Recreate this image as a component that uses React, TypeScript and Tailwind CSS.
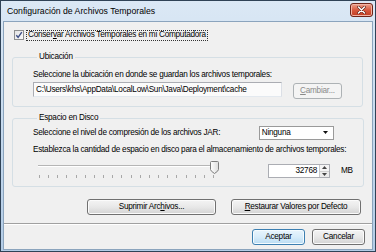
import React from "react";

const Btn = ({ children, w, def, disabled }: { children: React.ReactNode; w: string; def?: boolean; disabled?: boolean }) => (
  <div
    className={
      "h-[16px] flex items-center justify-center rounded-[3px] border " +
      w +
      " " +
      (disabled
        ? "border-[#adb2b5] bg-[#f4f4f4] text-[#8b8b8b]"
        : def
        ? "border-[#3c7fb1] bg-linear-to-b from-[#e9f5fd] via-[#d7ecfa] to-[#b9dcf3] shadow-[inset_0_0_0_1px_#f4fbff]"
        : "border-[#707070] bg-linear-to-b from-[#f4f4f4] via-[#e8e8e8] to-[#d3d3d3] shadow-[inset_0_0_0_1px_#fbfbfb]")
    }
  >
    {children}
  </div>
);

export default function App() {
  const ticks = Array.from({ length: 20 });
  return (
    <div className="w-[376px] h-[252px] border border-[#2f4256] px-[2px] pb-[1px] flex flex-col bg-linear-to-b from-[#dbe8f5] via-[#c6daee] to-[#b3cce6] font-['Liberation_Sans',Arial,sans-serif] text-[8.2px] tracking-[-0.25px] text-black leading-[10px] overflow-hidden">
      {/* Title bar */}
      <div className="h-[20px] flex items-start justify-between">
        <div className="pl-[4px] pt-[5px] text-[8.7px] tracking-normal leading-[11px] text-black">
          Configuración de Archivos Temporales
        </div>
        <div className="mt-[2px] w-[23px] h-[14px] rounded-[3px] border border-[#6e2418] bg-linear-to-b from-[#eba08d] via-[#d85a3f] to-[#c13a1f] shadow-[inset_0_0_0_1px_#f2b4a4] flex items-center justify-center">
          <svg width="9" height="8" viewBox="0 0 9 8">
            <path d="M1.5 1 L7.5 7 M7.5 1 L1.5 7" stroke="#5a1a10" strokeWidth="2.6" strokeLinecap="round" />
            <path d="M1.5 1 L7.5 7 M7.5 1 L1.5 7" stroke="#ffffff" strokeWidth="1.5" strokeLinecap="round" />
          </svg>
        </div>
      </div>

      {/* Client area */}
      <div className="flex-1 border border-[#8ba4bd] bg-[#f0f0f0] flex flex-col">
        {/* checkbox row */}
        <div className="mt-[8px] ml-[10px] flex items-center h-[10px]">
          <div className="w-[10px] h-[10px] border border-[#8e8f8f] bg-linear-to-br from-[#e4e4e4] to-[#fafafa] flex items-center justify-center">
            <svg width="8" height="8" viewBox="0 0 8 8">
              <path d="M1.3 4.3 L3.1 6.3 L6.8 1.2" stroke="#3e4f86" strokeWidth="1.4" fill="none" />
            </svg>
          </div>
          <div className="ml-[2px] border border-dotted border-[#333] px-[1px] h-[11px] flex items-center">
            Conser<span className="underline">v</span>ar Archivos Temporales en mi Computadora
          </div>
        </div>

        {/* Ubicación */}
        <fieldset className="mt-[12px] ml-[8px] mr-[9px] h-[55px] border border-[#d5dfe5] rounded-[3px] pl-[20px] pr-[19px]">
          <legend className="ml-[4px] px-[2px] leading-[10px]">Ubicación</legend>
          <div className="mt-[8px] h-[10px] whitespace-nowrap">
            Seleccione la ubicación en donde se guardan los archivos temporales:
          </div>
          <div className="mt-[2px] flex items-start">
            <div className="w-[249px] h-[15px] border border-[#abadb3] border-b-[#e3e9ef] border-r-[#dbdfe6] bg-[#fbfbfb] pl-[2px] flex items-center whitespace-nowrap">
              C:\Users\khs\AppData\LocalLow\Sun\Java\Deployment\cache
            </div>
            <div className="ml-[11px] mt-[1px]">
              <Btn w="w-[49px]" disabled>
                <span className="underline">C</span>ambiar...
              </Btn>
            </div>
          </div>
        </fieldset>

        {/* Espacio en Disco */}
        <fieldset className="mt-[6px] ml-[8px] mr-[9px] h-[74px] border border-[#d5dfe5] rounded-[3px] pl-[20px] pr-[10px]">
          <legend className="ml-[4px] px-[2px] leading-[10px]">Espacio en Disco</legend>
          <div className="mt-[2px] h-[15px] flex items-center justify-between pr-[19px]">
            <span className="whitespace-nowrap">Seleccione el nivel de compresión de los archivos JAR:</span>
            <div className="w-[75px] h-[14px] border border-[#9a9a9a] bg-white flex items-center justify-between pl-[2px] pr-[5px]">
              <span>Ninguna</span>
              <svg width="5" height="3" viewBox="0 0 5 3">
                <path d="M0 0 H5 L2.5 3 Z" fill="#111" />
              </svg>
            </div>
          </div>
          <div className="mt-[5px] h-[10px] whitespace-nowrap">
            Establezca la cantidad de espacio en disco para el almacenamiento de archivos temporales:
          </div>
          <div className="mt-[5px] flex items-start">
            <div className="relative w-[186px] h-[20px]">
              <div className="ml-[5px] mt-[5px] w-[175px] h-[2px] border-t border-[#b5b5b5] border-b border-b-[#ffffff]" />
              <div className="ml-[6px] mt-[8px] w-[175px] h-[3px] flex justify-between">
                {ticks.map((_, i) => (
                  <div key={i} className="w-px h-[3px] bg-[#a8a8a8]" />
                ))}
              </div>
              <svg className="absolute left-[177px] top-[1px]" width="9" height="13" viewBox="0 0 9 13">
                <defs>
                  <linearGradient id="tg" x1="0" y1="0" x2="1" y2="0">
                    <stop offset="0" stopColor="#ffffff" />
                    <stop offset="1" stopColor="#dcdcdc" />
                  </linearGradient>
                </defs>
                <path d="M0.5 1.5 Q0.5 0.5 1.5 0.5 H7.5 Q8.5 0.5 8.5 1.5 V8.5 Q8.5 10 4.5 12.5 Q0.5 10 0.5 8.5 Z" fill="url(#tg)" stroke="#7d7d7d" />
              </svg>
            </div>
            <div className="ml-[49px] mt-[4px] w-[62px] h-[14px] border border-[#abadb3] bg-white flex">
              <div className="flex-1 flex items-center justify-end pr-[2px]">32768</div>
              <div className="w-[10px] flex flex-col border-l border-[#c8c8c8]">
                <div className="flex-1 flex items-center justify-center bg-[#f4f4f4] border-b border-[#d0d0d0]">
                  <svg width="5" height="3" viewBox="0 0 5 3"><path d="M0 3 H5 L2.5 0 Z" fill="#444" /></svg>
                </div>
                <div className="flex-1 flex items-center justify-center bg-[#ececec]">
                  <svg width="5" height="3" viewBox="0 0 5 3"><path d="M0 0 H5 L2.5 3 Z" fill="#444" /></svg>
                </div>
              </div>
            </div>
            <div className="ml-[11px] mt-[6px]">MB</div>
          </div>
        </fieldset>

        {/* Action buttons */}
        <div className="mt-[12px] flex justify-end gap-[15px] pr-[11px]">
          <Btn w="w-[129px]">
            Suprimir Arc<span className="underline">h</span>ivos...
          </Btn>
          <Btn w="w-[130px]">
            <span className="underline">R</span>estaurar Valores por Defecto
          </Btn>
        </div>

        {/* separator */}
        <div className="mt-[8px] h-[2px] border-t border-[#a0a0a0] border-b border-b-[#ffffff]" />

        {/* OK / Cancel */}
        <div className="mt-[4px] flex justify-end gap-[7px] pr-[7px]">
          <Btn w="w-[53px]" def>
            Aceptar
          </Btn>
          <Btn w="w-[53px]">Cancelar</Btn>
        </div>
      </div>
    </div>
  );
}
